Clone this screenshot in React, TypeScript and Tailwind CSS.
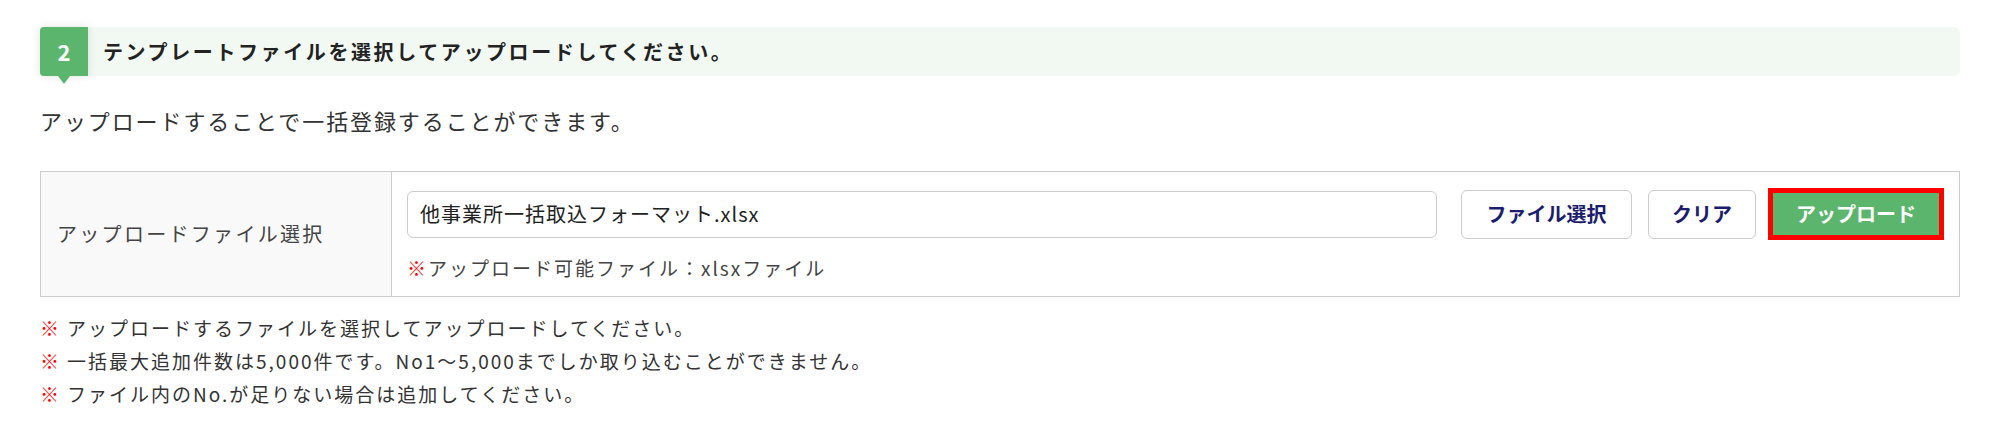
import React from 'react'

const notes = [
  'アップロードするファイルを選択してアップロードしてください。',
  '一括最大追加件数は5,000件です。No1～5,000までしか取り込むことができません。',
  'ファイル内のNo.が足りない場合は追加してください。',
]

export default function App() {
  return (
    <div className="min-h-screen bg-white px-10 pt-[27px] font-['Noto_Sans_CJK_JP',sans-serif]">
      {/* step header */}
      <div className="flex h-[49px] items-center rounded-r-md bg-[#f2f9f3]">
        <div className="relative flex h-full w-12 items-center justify-center rounded-l-[4px] bg-[#5cb56c] shadow-[0_0_8px_rgba(0,0,0,0.12)]">
          <span className="text-[22px] font-bold text-white">2</span>
          <span className="absolute left-1/2 top-full -translate-x-1/2 border-x-[6px] border-t-[8px] border-x-transparent border-t-[#5cb56c]" />
        </div>
        <h2 className="ml-[15px] text-[20px] font-bold tracking-[2.6px] text-[#222]">
          テンプレートファイルを選択してアップロードしてください。
        </h2>
      </div>

      <p className="mt-[28px] text-[22px] leading-[32px] tracking-[1.9px] text-[#333]">
        アップロードすることで一括登録することができます。
      </p>

      {/* upload table */}
      <div className="mt-[35px] grid grid-cols-[350px_1fr] border border-[#cccccc]">
        <div className="flex items-center bg-[#f9f9f9] px-4 text-[20px] tracking-[2.3px] text-[#444]">
          アップロードファイル選択
        </div>
        <div className="border-l border-[#cccccc] pb-[14px] pl-[15px] pr-[15px] pt-4">
          <div className="flex items-center">
            <div className="flex h-[47px] flex-1 items-center rounded-md border border-[#cccccc] px-3 text-[20px] tracking-[1px] text-[#222]">
              他事業所一括取込フォーマット.xlsx
            </div>
            <button className="ml-6 h-[49px] w-[171px] rounded-md border border-[#cccccc] bg-white text-[20px] font-bold text-[#1c1c70]">
              ファイル選択
            </button>
            <button className="ml-4 h-[49px] w-[108px] rounded-md border border-[#cccccc] bg-white text-[20px] font-bold text-[#1c1c70]">
              クリア
            </button>
            <button className="ml-3 h-[52px] w-[176px] border-[5px] border-[#ff0000] bg-[#5cb56c] text-[20px] font-bold text-white">
              アップロード
            </button>
          </div>
          <p className="mt-[14px] text-[19px] leading-[28px] tracking-[2px] text-[#444]">
            <span className="text-[#ff0000]">※</span>アップロード可能ファイル：xlsxファイル
          </p>
        </div>
      </div>

      {/* notes */}
      <ul className="mt-[14px]">
        {notes.map(note => (
          <li key={note} className="flex text-[19px] leading-[33px] tracking-[2px] text-[#333]">
            <span className="mr-[6px] text-[#ff0000]">※</span>
            {note}
          </li>
        ))}
      </ul>
    </div>
  )
}
